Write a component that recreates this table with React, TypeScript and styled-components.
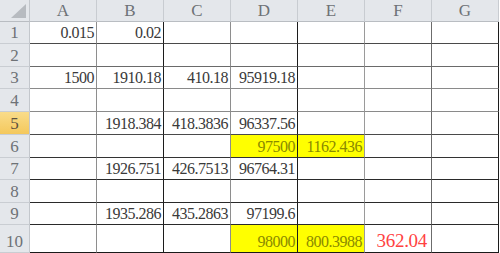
import React from 'react'
import styled, { createGlobalStyle } from 'styled-components'

const GlobalStyle = createGlobalStyle`
  html, body {
    margin: 0;
    padding: 0;
    background: #ffffff;
  }
  body {
    font-family: 'Liberation Serif', 'Noto Sans CJK TC', serif;
  }
`

const columns = ['A', 'B', 'C', 'D', 'E', 'F', 'G']
const rowHeights = [22, 23, 22, 23, 23, 23, 22, 23, 22, 28]

// right border colour per column, bottom border colour per row
const colLines = ['#8e8e8e', '#1c1c1c', '#8e8e8e', '#1c1c1c', '#9a9a9a', '#6c6c6c', '#1c1c1c']
const rowLines = ['#4a4a4a', '#6a6a6a', '#8a8a8a', '#8a8a8a', '#4a4a4a', '#333333', '#2a2a2a', '#2a2a2a', '#2a2a2a', '#1a1a1a']

type Tone = 'plain' | 'yellow' | 'red'

interface CellData {
  value: string
  tone?: Tone
}

const data: Record<number, Record<string, CellData>> = {
  1: { A: { value: '0.015' }, B: { value: '0.02' } },
  3: {
    A: { value: '1500' },
    B: { value: '1910.18' },
    C: { value: '410.18' },
    D: { value: '95919.18' },
  },
  5: { B: { value: '1918.384' }, C: { value: '418.3836' }, D: { value: '96337.56' } },
  6: { D: { value: '97500', tone: 'yellow' }, E: { value: '1162.436', tone: 'yellow' } },
  7: { B: { value: '1926.751' }, C: { value: '426.7513' }, D: { value: '96764.31' } },
  9: { B: { value: '1935.286' }, C: { value: '435.2863' }, D: { value: '97199.6' } },
  10: {
    D: { value: '98000', tone: 'yellow' },
    E: { value: '800.3988', tone: 'yellow' },
    F: { value: '362.04', tone: 'red' },
  },
}

const selectedRow = 5

export default function App() {
  return (
    <>
      <GlobalStyle />
      <Sheet $rows={rowHeights}>
        <Corner>
          <svg width="15" height="14" viewBox="0 0 15 14">
            <polygon points="15,0 15,14 0,14" fill="#b7bbc0" />
          </svg>
        </Corner>
        {columns.map((col) => (
          <ColHead key={col}>{col}</ColHead>
        ))}
        {rowHeights.map((_, i) => {
          const row = i + 1
          return (
            <React.Fragment key={row}>
              <RowHead $selected={row === selectedRow}>{row}</RowHead>
              {columns.map((col, c) => {
                const cell = data[row]?.[col]
                return (
                  <Cell
                    key={col}
                    $tone={cell?.tone ?? 'plain'}
                    $right={colLines[c]}
                    $bottom={rowLines[i]}
                  >
                    {cell?.value}
                  </Cell>
                )
              })}
            </React.Fragment>
          )
        })}
      </Sheet>
    </>
  )
}

const Sheet = styled.div<{ $rows: number[] }>`
  display: grid;
  grid-template-columns: 30px repeat(7, 67px);
  grid-template-rows: 22px ${({ $rows }) => $rows.map((h) => `${h}px`).join(' ')};
  width: 500px;
  height: 253px;
  overflow: hidden;
`

const HeadBase = styled.div`
  box-sizing: border-box;
  background: #e4e7eb;
  color: #6e7276;
  font-family: 'Liberation Serif', serif;
  font-size: 17px;
  display: flex;
  justify-content: center;
  align-items: flex-end;
  padding-bottom: 1px;
  line-height: 1;
`

const Corner = styled(HeadBase)`
  align-items: flex-end;
  justify-content: flex-end;
  padding: 0 3px 3px 0;
  border-right: 1px solid #c3c7cc;
  border-bottom: 1px solid #b9bdc2;
`

const ColHead = styled(HeadBase)`
  border-right: 1px solid #c8ccd1;
  border-bottom: 1px solid #b9bdc2;
  padding-bottom: 2px;
`

const RowHead = styled(HeadBase)<{ $selected: boolean }>`
  border-right: 1px solid #c3c7cc;
  border-bottom: 1px solid #c9cdd2;
  background: ${({ $selected }) =>
    $selected ? 'linear-gradient(#f9dc8a, #f4c85c)' : '#e4e7eb'};
  color: ${({ $selected }) => ($selected ? '#5e523f' : '#6e7276')};
  padding-bottom: 2px;
`

const toneBg: Record<Tone, string> = {
  plain: '#ffffff',
  yellow: '#ffff00',
  red: '#ffffff',
}

const toneColor: Record<Tone, string> = {
  plain: '#3a3a3a',
  yellow: '#8a8a00',
  red: '#ff4242',
}

const Cell = styled.div<{ $tone: Tone; $right: string; $bottom: string }>`
  box-sizing: border-box;
  display: flex;
  justify-content: flex-end;
  align-items: flex-end;
  white-space: nowrap;
  overflow: visible;
  background: ${({ $tone }) => toneBg[$tone]};
  color: ${({ $tone }) => toneColor[$tone]};
  border-right: 1px solid ${({ $right }) => $right};
  border-bottom: 1px solid ${({ $bottom }) => $bottom};
  font-size: ${({ $tone }) => ($tone === 'red' ? '19px' : '16px')};
  letter-spacing: ${({ $tone }) => ($tone === 'red' ? '-0.3px' : '-0.5px')};
  line-height: 1;
  padding: 0 ${({ $tone }) => ($tone === 'red' ? '4px' : '2px')} 2px 0;
`
